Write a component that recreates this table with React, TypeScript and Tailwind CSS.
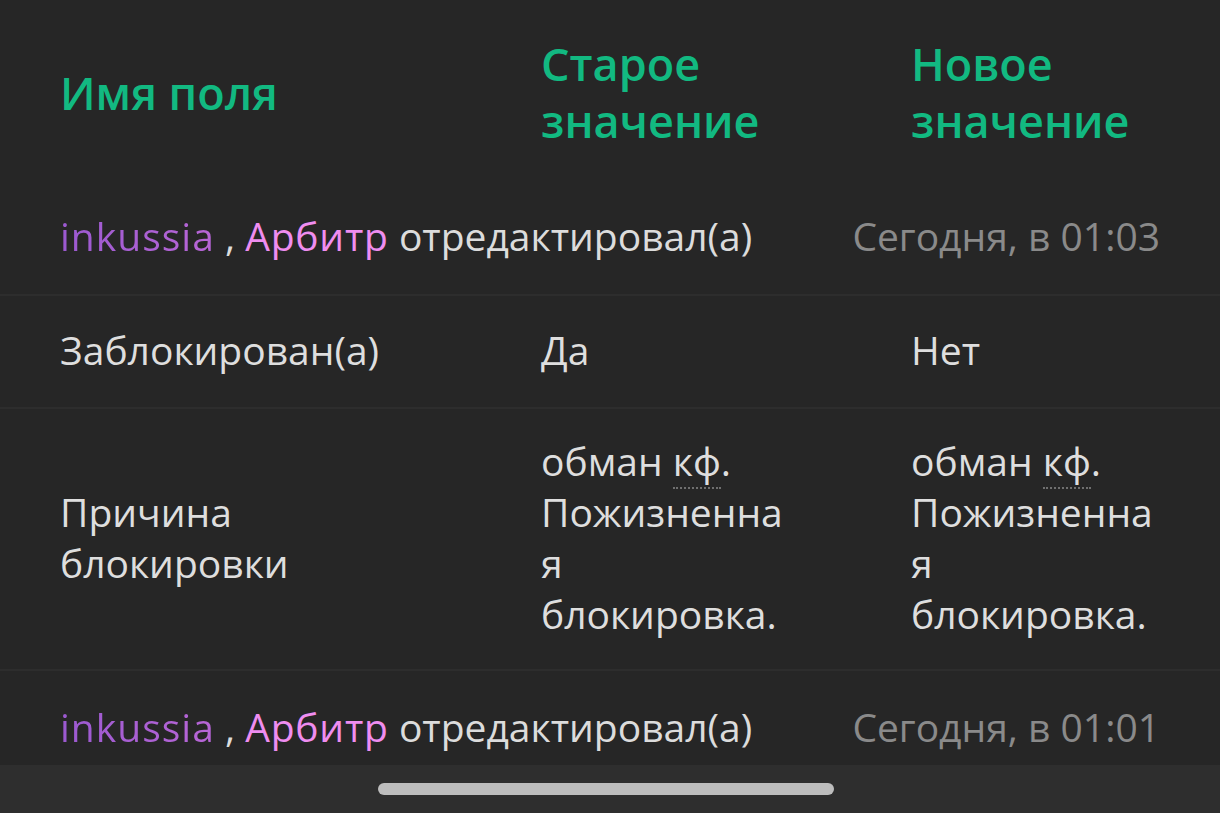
import React from "react";

const font = { fontFamily: '"Open Sans", "Noto Sans", sans-serif' };

function EditorRow({ time }: { time: string }) {
  return (
    <div className="flex items-center justify-between h-full pb-[4px] pr-[60px] pl-[60px] whitespace-nowrap">
      <div>
        <span className="tracking-[1px] bg-gradient-to-r from-[#9b59d0] to-[#b866d6] bg-clip-text text-transparent">inkussia</span>
        <span className="text-[#dcdcdc]"> , </span>
        <span className="tracking-[0.8px] text-[#ef8df0]">Арбитр</span>
        <span className="text-[#dcdcdc]"> отредактировал(а)</span>
      </div>
      <div className="text-[#8a8a8a]">{time}</div>
    </div>
  );
}

function Reason() {
  return (
    <div className="w-[252px] break-words">
      обман <span className="border-b-2 border-dotted border-[#6f6f6f]">кф</span>. Пожизненная блокировка.
    </div>
  );
}

export default function App() {
  return (
    <div style={font} className="w-[1220px] h-[813px] bg-[#262626] flex flex-col overflow-hidden text-[39px] leading-[51px] text-[#dedede]">
      <div className="flex-1 overflow-hidden flex flex-col">
        <div className="h-[180px] shrink-0 flex items-center pl-[60px] pt-[4px] font-semibold text-[45px] leading-[57px] text-[#12b981]">
          <div className="w-[481px]">Имя поля</div>
          <div className="w-[370px]"><div className="w-[250px]">Старое значение</div></div>
          <div className="w-[250px]">Новое значение</div>
        </div>
        <div className="h-[114px] shrink-0">
          <EditorRow time="Сегодня, в 01:03" />
        </div>
        <div className="h-[2px] shrink-0 bg-[#2d2d2d]" />
        <div className="h-[111px] shrink-0 flex items-center pb-[4px] pl-[60px]">
          <div className="w-[481px]">Заблокирован(а)</div>
          <div className="w-[370px]">Да</div>
          <div>Нет</div>
        </div>
        <div className="h-[2px] shrink-0 bg-[#2d2d2d]" />
        <div className="h-[260px] shrink-0 flex items-center pb-[4px] pl-[60px]">
          <div className="w-[481px]">Причина<br />блокировки</div>
          <div className="w-[370px]"><Reason /></div>
          <Reason />
        </div>
        <div className="h-[2px] shrink-0 bg-[#2d2d2d]" />
        <div className="h-[114px] shrink-0">
          <EditorRow time="Сегодня, в 01:01" />
        </div>
      </div>
      <div className="h-[48px] shrink-0 bg-[#2e2e2e] flex items-center pl-[378px]">
        <div className="w-[456px] h-[12px] rounded-full bg-[#bdbdbd]" />
      </div>
    </div>
  );
}
